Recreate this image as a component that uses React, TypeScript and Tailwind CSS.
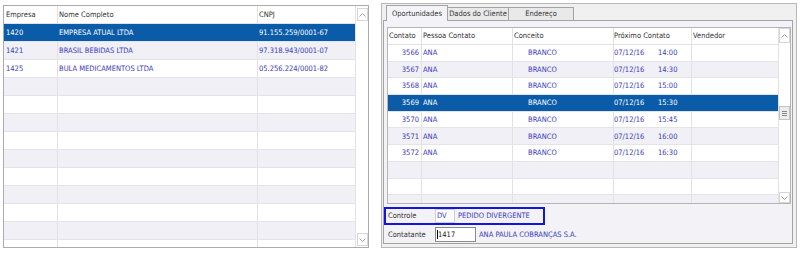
import React from 'react';

const BLUE_TXT = 'text-[#3b3bbd]';

function Chevron({ up }: { up: boolean }) {
  return (
    <svg width="7" height="4" viewBox="0 0 7 4">
      <path
        d={up ? 'M0.5 3.5L3.5 0.5L6.5 3.5' : 'M0.5 0.5L3.5 3.5L6.5 0.5'}
        stroke="#a0a0a0"
        fill="none"
        strokeWidth="1"
      />
    </svg>
  );
}

function ScrollButton({ up, h }: { up: boolean; h: string }) {
  return (
    <div className={`w-[11px] ${h} border border-[#d6d6d6] bg-white flex items-center justify-center`}>
      <Chevron up={up} />
    </div>
  );
}

const leftRows: [string, string, string][] = [
  ['1420', 'EMPRESA ATUAL LTDA', '91.155.259/0001-67'],
  ['1421', 'BRASIL BEBIDAS LTDA', '97.318.943/0001-07'],
  ['1425', 'BULA MEDICAMENTOS LTDA', '05.256.224/0001-82'],
];

function LeftPanel() {
  const rows = Array.from({ length: 13 }, (_, i) => leftRows[i] ?? ['', '', '']);
  return (
    <div className="ml-[3px] mt-[5px] w-[366px] h-[243px] border border-[#ababab] bg-white flex overflow-hidden shrink-0">
      <div className="w-[351px] flex flex-col">
        <div className="flex h-[18px] shrink-0 border-b border-[#e2e2e2] text-[#333]">
          <div className="w-[54px] border-r border-[#e2e2e2] pl-[2px] flex items-center">Empresa</div>
          <div className="w-[200px] border-r border-[#e2e2e2] pl-[1px] flex items-center">Nome Completo</div>
          <div className="w-[97px] pl-[1px] flex items-center">CNPJ</div>
        </div>
        {rows.map((r, i) => {
          const sel = i === 0;
          const bg = sel ? 'bg-[#0b5ca8] text-white' : i % 2 === 1 ? 'bg-[#f0f0f6] text-[#3b3bbd]' : 'bg-white text-[#3b3bbd]';
          const line = sel ? 'border-[#0b5ca8]' : 'border-[#e2e2e2]';
          return (
            <div key={i} className={`flex h-[18px] shrink-0 border-b border-[#e4e4e8] ${bg}`}>
              <div className={`w-[54px] border-r ${line} pl-[2px] flex items-center`}>{r[0]}</div>
              <div className={`w-[200px] border-r ${line} pl-[1px] flex items-center`}>{r[1]}</div>
              <div className="w-[97px] pl-[1px] flex items-center">{r[2]}</div>
            </div>
          );
        })}
      </div>
      <div className="w-[13px] border-l border-[#e2e2e2] flex flex-col justify-between pl-[1px] pt-[2px] pb-[1px]">
        <ScrollButton up h="h-[13px]" />
        <ScrollButton up={false} h="h-[13px]" />
      </div>
    </div>
  );
}

const times = ['14:00', '14:30', '15:00', '15:30', '15:45', '16:00', '16:30'];

function RightGrid() {
  const rows = Array.from({ length: 10 }, (_, i) => (i < 7 ? { id: String(3566 + i), t: times[i] } : null));
  return (
    <div className="w-[404px] h-[177px] shrink-0 border border-[#b4b4b4] bg-white flex overflow-hidden">
      <div className="w-[390px] flex flex-col">
        <div className="flex h-[17px] shrink-0 border-b border-[#e2e2e2] text-[#333]">
          <div className="w-[34px] border-r border-[#e2e2e2] pl-[1px] flex items-center">Contato</div>
          <div className="w-[91px] border-r border-[#e2e2e2] pl-[1px] flex items-center">Pessoa Contato</div>
          <div className="w-[101px] border-r border-[#e2e2e2] pl-[1px] flex items-center">Conceito</div>
          <div className="w-[78px] border-r border-[#e2e2e2] flex items-center">Próximo Contato</div>
          <div className="w-[86px] pl-[1px] flex items-center">Vendedor</div>
        </div>
        {rows.map((r, i) => {
          const sel = i === 3;
          const bg = sel ? 'bg-[#0b5ca8] text-white' : i % 2 === 1 ? 'bg-[#f0f0f6] text-[#3b3bbd]' : 'bg-white text-[#3b3bbd]';
          const line = sel ? 'border-[#0b5ca8]' : 'border-[#e2e2e2]';
          return (
            <div key={i} className={`flex h-[16.7px] shrink-0 border-b border-[#e4e4e8] ${bg}`}>
              <div className={`w-[34px] border-r ${line} pr-[2px] flex items-center justify-end`}>{r?.id}</div>
              <div className={`w-[91px] border-r ${line} pl-[1px] flex items-center`}>{r ? 'ANA' : ''}</div>
              <div className={`w-[101px] border-r ${line} pl-[15px] flex items-center`}>{r ? 'BRANCO' : ''}</div>
              <div className={`w-[78px] border-r ${line} flex items-center`}>
                {r && (
                  <>
                    <span className="w-[44px]">07/12/16</span>
                    <span>{r.t}</span>
                  </>
                )}
              </div>
              <div className="w-[86px]" />
            </div>
          );
        })}
      </div>
      <div className="w-[12px] border-l border-[#e2e2e2] flex flex-col pt-[0px] pb-[0px] relative">
        <ScrollButton up h="h-[15px]" />
        <div className="mt-[63px] w-[11px] h-[14px] border border-[#c4c4c4] bg-[#ececec] flex flex-col items-center justify-center gap-[1px]">
          <div className="w-[5px] h-px bg-[#888]" />
          <div className="w-[5px] h-px bg-[#888]" />
          <div className="w-[5px] h-px bg-[#888]" />
        </div>
        <div className="flex-1" />
        <ScrollButton up={false} h="h-[11px]" />
      </div>
    </div>
  );
}

function RightPanel() {
  return (
    <div className="ml-[12px] mt-[3px] w-[416px] h-[245px] border border-[#b8b8b8] bg-[#f0f0f0] flex flex-col shrink-0">
      <div className="h-[16px] shrink-0 flex items-start pl-[4px] text-[#333]">
        <div className="relative z-10 mt-[1px] w-[62px] h-[16px] border-l border-t border-r border-[#a3a3a3] bg-[#f4f4f8] flex items-center justify-center">
          Oportunidades
        </div>
        <div className="mt-[3px] w-[61px] h-[13px] border-t border-r border-[#a3a3a3] bg-[#e9e9e9] flex items-center justify-center">
          Dados do Cliente
        </div>
        <div className="mt-[3px] w-[65px] h-[13px] border-t border-r border-[#a3a3a3] bg-[#e9e9e9] flex items-center justify-center">
          Endereço
        </div>
      </div>
      <div className="ml-[1px] w-[410px] h-[224px] shrink-0 border border-[#a3a3a3] bg-[#f2f2f7] flex flex-col pl-[3px] pt-[6px]">
        <RightGrid />
        <div className="-ml-[3px] mt-[3px] w-[161px] h-[18px] border-2 border-[#1414e0] flex items-center pl-[2px]">
          <span className="w-[47px] text-[#333]">Controle</span>
          <div className={`w-[20px] h-[14px] bg-white border border-[#d0d0d0] flex items-center pl-[1px] ${BLUE_TXT}`}>DV</div>
          <span className={`ml-[3px] ${BLUE_TXT}`}>PEDIDO DIVERGENTE</span>
        </div>
        <div className="-ml-[3px] mt-[2px] h-[15px] flex items-center pl-[4px]">
          <span className="w-[47px] text-[#333]">Contatante</span>
          <div className="w-[41px] h-[15px] bg-white border border-[#8a8a8a] flex items-center pl-[1px] text-[#222]">
            <div className="w-px h-[9px] bg-black" />
            <span>1417</span>
          </div>
          <span className={`ml-[3px] ${BLUE_TXT}`}>ANA PAULA COBRANÇAS S.A.</span>
        </div>
      </div>
    </div>
  );
}

export default function App() {
  return (
    <div className="w-[800px] h-[254px] bg-white flex items-start overflow-hidden font-['DejaVu_Sans_Condensed','DejaVu_Sans',sans-serif] text-[7.5px] leading-none text-[#333]">
      <LeftPanel />
      <RightPanel />
    </div>
  );
}
